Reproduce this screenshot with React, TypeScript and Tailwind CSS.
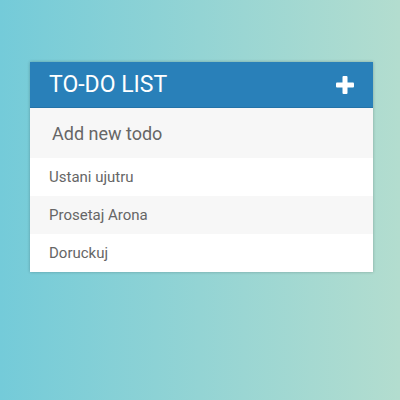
const todos = ["Ustani ujutru", "Prosetaj Arona", "Doruckuj"];

const App = () => {
  return (
    <div className="w-[400px] h-[400px] bg-[linear-gradient(to_right,#74cbd9,#b3ddcf)] pt-[62px] pl-[30px] font-['Roboto',sans-serif]">
      <div className="w-[343px] bg-white shadow-[0_0_3px_rgba(0,0,0,0.25)]">
        {/* Header */}
        <div className="h-[46px] bg-[#2980b9] flex items-center justify-between pl-[19px] pr-[19px] border-b border-[#2473a8]">
          <h1 className="text-[23px] text-white tracking-[0px] leading-none">TO-DO LIST</h1>
          <svg width="18" height="18" viewBox="0 0 18 18">
            <rect x="6.5" y="0" width="5" height="18" rx="1" fill="white" />
            <rect x="0" y="6.5" width="18" height="5" rx="1" fill="white" />
          </svg>
        </div>

        {/* Input */}
        <div className="h-[50px] bg-[#f7f7f7] flex items-center pl-[22px]">
          <span className="text-[18px] text-[#666]">Add new todo</span>
        </div>

        {/* List */}
        <ul>
          {todos.map((t, i) => (
            <li
              key={i}
              className={`h-[38px] flex items-center pl-[19px] text-[15px] text-[#666] ${i % 2 === 1 ? "bg-[#f7f7f7]" : "bg-white"}`}
            >
              {t}
            </li>
          ))}
        </ul>
      </div>
    </div>
  );
};

export default App;
